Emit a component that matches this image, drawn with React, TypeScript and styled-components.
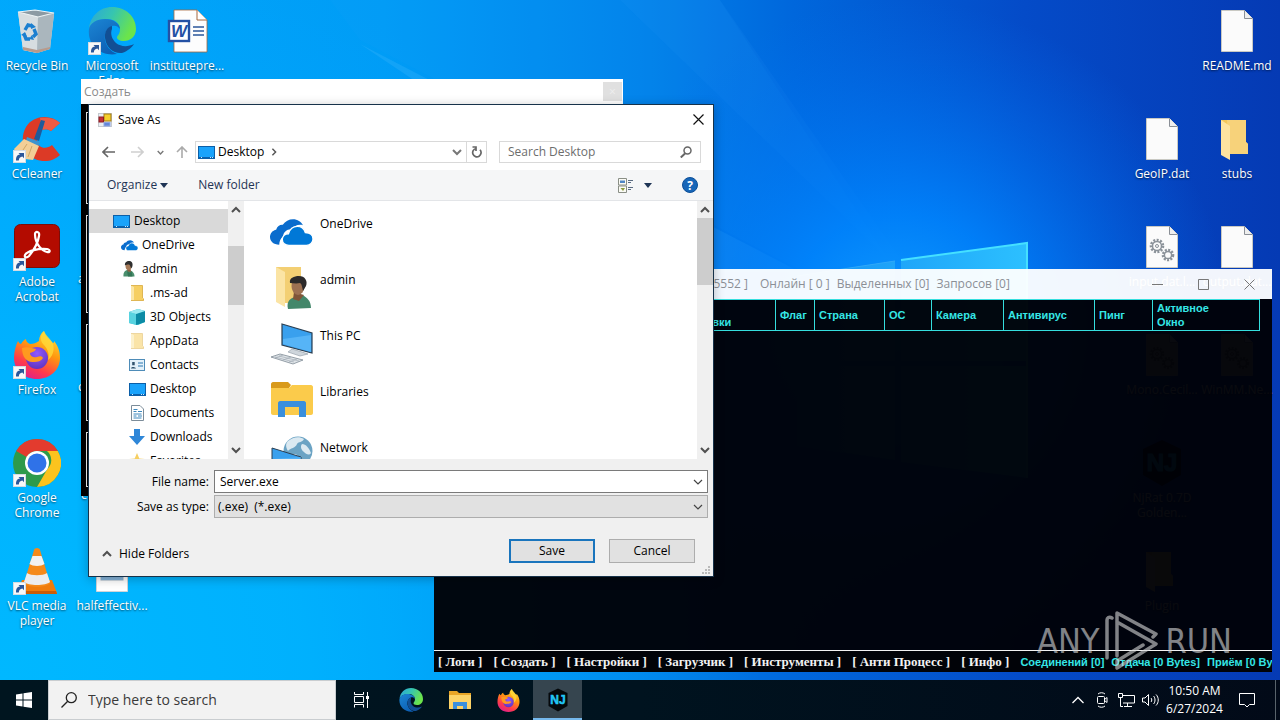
import React from "react";
import styled, { createGlobalStyle, css } from "styled-components";

const UI = `"Open Sans", "Noto Sans", sans-serif`;

const GlobalStyle = createGlobalStyle`
  * { box-sizing: border-box; }
  body { margin: 0; font-family: ${UI}; font-size: 12px; line-height: 16px; color: #000; }
  button, input, select { font: inherit; color: inherit; border-radius: 0; margin: 0; }
  button { background: none; border: 0; padding: 0; cursor: default; }
  svg { display: block; flex: none; }
`;

/* ---------- shell ---------- */

const Screen = styled.div`
  display: flex;
  flex-direction: column;
  height: 100vh;
  min-height: 700px;
  overflow: hidden;
`;

const Desktop = styled.main`
  position: relative;
  flex: 1;
  overflow: hidden;
  display: flex;
  justify-content: space-between;
  background: #0a6fe0;
`;

const Wallpaper = styled.svg`
  position: absolute;
  inset: 0;
  width: 100%;
  height: 100%;
`;

const IconGrid = styled.div<{ $cols: number }>`
  position: relative;
  display: grid;
  grid-template-columns: repeat(${(p) => p.$cols}, 75px);
  grid-auto-rows: 108px;
  margin-right: ${(p) => (p.$cols === 2 ? "5px" : "0")};
`;

const IconCell = styled.div<{ $col: number; $row: number }>`
  grid-column: ${(p) => p.$col};
  grid-row: ${(p) => p.$row};
  display: flex;
  flex-direction: column;
  align-items: center;
  gap: 3px;
  padding: 7px 1px 0 0;
  color: #fff;
  text-align: center;
`;

const IconLabel = styled.span`
  font-size: 12px;
  line-height: 15px;
  text-shadow: 0 1px 2px rgba(0, 0, 0, 0.6);
  white-space: pre;
`;

const EdgeLabel = styled(IconLabel)`
  align-self: flex-start;
  padding-left: 3px;
  margin-top: 48px;
`;

/* ---------- small glyphs ---------- */

const Chevron = ({ dir = "down", size = 10, color = "#444", w = 1.5 }: { dir?: "down" | "up" | "right"; size?: number; color?: string; w?: number }) => {
  const d = { down: "M1 3l4 4 4-4", up: "M1 7l4-4 4 4", right: "M3 1l4 4-4 4" }[dir];
  return (
    <svg width={size} height={size} viewBox="0 0 10 10" fill="none" stroke={color} strokeWidth={w}>
      <path d={d} />
    </svg>
  );
};

const ShortcutArrow = () => (
  <g>
    <rect x="0.5" y="35.5" width="12" height="12" fill="#f8f8f8" stroke="#d4dbe2" />
    <path d="M3 45.500c0-4 1-5.500 4-6l-1.500-1.600H11v5.300l-1.600-1.600C7 42 6 43 5.800 45.500z" fill="#2b579a" />
  </g>
);

const MonitorIcon = () => (
  <svg width="17" height="13" viewBox="0 0 17 13">
    <rect x="0.5" y="0.500" width="16" height="12" fill="#1aa3fb" stroke="#0b5fa8" />
    <path d="M1 11.500h15" stroke="#0b62ad" />
    <path d="M3 11.500h1M12 11.500h1M14 11.500h1" stroke="#cfeaff" />
  </svg>
);

const CloudIcon = ({ w, h }: { w: number; h: number }) => (
  <svg width={w} height={h} viewBox="0 0 42 26">
    <path d="M9 25C3.500 25 0 21.800 0 17.500c0-3.700 2.600-6.600 6-7.200C7 6.500 10 5.200 12.500 5.500 14.800 1.800 18.500 0 22.500 0c4.300 0 7.900 2.300 9.700 5.800-4.500-1.300-8.600.6-10.400 4-5-.7-9 2.700-9 7.200-2.600 1.700-3.600 5-3.800 8z" fill="#0a6ccd" />
    <path d="M18.500 25.500c-3.700 0-6.500-2.300-6.500-5.700 0-3.200 2.600-5.600 6-5.600 1.400-4.600 4.400-7.200 8.600-7.200 4 0 6.800 2.300 7.900 6 4.500.2 7.500 2.700 7.500 6.300 0 3.700-2.800 6.200-6.400 6.200z" fill="#0078d7" stroke="#fff" strokeWidth="1.300" />
  </svg>
);

const UserBust = () => (
  <svg width="12" height="16" viewBox="0 0 24 32">
    <path d="M1 31c-1-8 3-13 9-13 7 0 13 5 13 13z" fill="#4a8f6d" />
    <path d="M8 14l1 7 7 1-1-8z" fill="#8d6043" />
    <ellipse cx="11" cy="10" rx="6" ry="8" fill="#a67a58" />
    <path d="M4 9C3 3 7 0 12 0s8 4 7 9c0 3-2 5-3 6-1-4-2-7-4-8-3 0-6 0-8 2z" fill="#2f2f2f" />
    <path d="M8 20c2 3 6 4 9 1l2 10h-9z" fill="#347556" />
  </svg>
);

const SmallFolder = ({ pale }: { pale?: boolean }) => (
  <svg width="16" height="16" viewBox="0 0 16 16" opacity={pale ? 0.55 : 1}>
    <path d="M2 .5h11.500V13l1.500 1v1.500H2z" fill="#f6cf62" />
    <path d="M2 .5l3 1.500v13.800L2 15z" fill="#fbe6a6" />
    <path d="M2 .5h11.500V13M2 15.500h12.500v-2" fill="none" stroke="#d8a93c" strokeWidth=".8" />
  </svg>
);

/* ---------- desktop icons ---------- */

const Art = ({ children, shortcut }: { children: React.ReactNode; shortcut?: boolean }) => (
  <svg width="48" height="48" viewBox="0 0 48 48">
    {children}
    {shortcut && <ShortcutArrow />}
  </svg>
);

const Recycle = () => (
  <Art>
    <path d="M5 5l36 2-4 35-13 4-14-3z" fill="#cfd6da" />
    <path d="M5 5l20 4-1 37-14-3z" fill="#d7dde0" />
    <path d="M25 9l16-3-4 36-13 4z" fill="#aab6bd" />
    <path d="M5 5l17-2 19 3-16 4z" fill="#8c9aa3" stroke="#eef3f5" strokeWidth="1.200" />
    <path d="M10 40l14 3 13-3v2l-13 4-14-3z" fill="#b79a8c" />
    <g fill="none" stroke="#1c7fd0" strokeWidth="3.400">
      <path d="M12 23l3-5 4 1" />
      <path d="M21 22l2 5-3 3" />
      <path d="M17 32h-4l-2-5" />
    </g>
    <path d="M18 16l5 4-5 2zM21 33l-5-1 3-4zM8 28l4-3 2 5z" fill="#1c7fd0" />
  </Art>
);

const EdgeShapes = () => (
  <>
    <defs>
      <linearGradient id="edgeTop" x1="0" y1="0" x2="1" y2=".4">
        <stop offset="0" stopColor="#2aa5dc" />
        <stop offset=".5" stopColor="#36c5b0" />
        <stop offset="1" stopColor="#6be44b" />
      </linearGradient>
      <linearGradient id="edgeMid" x1="0" y1="0" x2=".6" y2="1">
        <stop offset="0" stopColor="#1c86d4" />
        <stop offset="1" stopColor="#0c5fb4" />
      </linearGradient>
    </defs>
    <path d="M1 22C2 9 12 0 24 0c14 0 24 10 24 22 0 8-6 12-12 12-5 0-7-2-7-3.500 0-2 3-3 3-8C32 16 26 12 19 12 9 12 2 17 1 22z" fill="url(#edgeTop)" />
    <path d="M1 22c1-6 8-10 16-10 9 0 15 5 15 10-2-3-5-4-8-3-5 2-8 7-7 14 1 6 5 11 12 14C13 50-1 38 1 22z" fill="url(#edgeMid)" />
    <path d="M24 19c-5 1-7.500 6-7 12 1 10 9 16 17 15 6-2 10-6 12-9-6 3-13 3-18-1-4-4-6-9-4-14 0-1 0-2 0-3z" fill="#124f94" />
  </>
);

const WordDoc = () => (
  <Art>
    <path d="M11 3h23l10 10v32H11z" fill="#fdfdfd" stroke="#a4673e" strokeWidth=".8" />
    <path d="M34 3v10h10" fill="#fff" stroke="#a4673e" />
    <path d="M30 20h11M30 24h11M30 28h11" stroke="#2b579a" strokeWidth="1.400" />
    <rect x="6" y="14" width="20" height="20" fill="#fff" stroke="#2451a4" strokeWidth="2.400" />
    <text x="16" y="30" textAnchor="middle" fontFamily="Liberation Sans, sans-serif" fontWeight="700" fontStyle="italic" fontSize="17" fill="#2451a4">W</text>
  </Art>
);

const CCleaner = () => (
  <Art shortcut>
    <path d="M47 8C38-1 20 0 13 12c-7 12-2 28 9 32 9 4 19 2 25-4l-8-10c-6 5-14 3-15-4-2-9 6-15 14-10z" fill="#dc3a26" />
    <path d="M47 8l-9 8c-3-2-6-2-9-1L27 3c8-1 15 0 20 5z" fill="#ee5b43" />
    <path d="M28 5l4 1-6 20-5-2z" fill="#1e5b9b" />
    <path d="M14 22l13 5-3 7-12-5z" fill="#3d93cf" />
    <path d="M11 24l15 7-6 14-8-1-8-4-3-6z" fill="#f2cf97" />
    <path d="M14 29l-6 9M19 31l-4 11" stroke="#d2a765" fill="none" />
  </Art>
);

const Acrobat = () => (
  <Art shortcut>
    <rect x="1.500" y="1.500" width="45" height="43" rx="6" fill="#b30b00" stroke="#7b0d08" />
    <path d="M22 11c0-3 5-3 4 2-1 7-5 14-10 20-2 2-5 2-4-1 2-4 14-7 22-6 4 1 3 4 0 3-5-1-12-8-12-18z" fill="none" stroke="#fff" strokeWidth="2.200" strokeLinejoin="round" />
  </Art>
);

const FirefoxShapes = () => (
  <>
    <defs>
      <linearGradient id="ffBody" x1=".8" y1="0" x2=".3" y2="1">
        <stop offset="0" stopColor="#ffe13d" />
        <stop offset=".4" stopColor="#ff980e" />
        <stop offset=".75" stopColor="#ff3b4b" />
        <stop offset="1" stopColor="#e01f8a" />
      </linearGradient>
      <radialGradient id="ffGlobe" cx=".5" cy=".3" r=".8">
        <stop offset="0" stopColor="#9059ff" />
        <stop offset="1" stopColor="#5b2fb8" />
      </radialGradient>
    </defs>
    <path d="M5 10c1 2 2 3 3 3 2-3 3-4 5-5 0 3 2 4 4 5 4 0 6-1 9-3 0-4 2-8 5-10 1 5 5 8 9 12 1 0 1-1 1-2 5 6 6 12 6 17 0 12-10 21-23 21C11 48 1 39 1 27c0-7 2-13 4-17z" fill="url(#ffBody)" />
    <circle cx="24" cy="27" r="11" fill="url(#ffGlobe)" />
    <path d="M9 17c5-2 10 0 14 1-1 3-4 3-6 4 0 3 3 5 7 4 3-1 5-1 6 1-2 3-5 4-9 4C14 32 9 26 9 17z" fill="#ff9a1f" />
    <path d="M31 0c-4 5-4 9-1 13 4 4 7 9 5 16 4-3 7-9 5-16-2-5-7-8-9-13z" fill="#ffd93a" opacity=".8" />
  </>
);

const ChromeArt = () => (
  <Art shortcut>
    <circle cx="24" cy="24" r="24" fill="#2d9a4b" />
    <path d="M24 0a24 24 0 0 1 20.800 12H24a12 12 0 0 0-10.400 6L3.200 12A24 24 0 0 1 24 0z" fill="#e33b2e" />
    <path d="M44.800 12A24 24 0 0 1 24 48l10.400-18A12 12 0 0 0 34 12z" fill="#fcc31e" />
    <circle cx="24" cy="24" r="12" fill="#fff" />
    <circle cx="24" cy="24" r="9.500" fill="#2f72e8" />
  </Art>
);

const VlcArt = () => (
  <Art shortcut>
    <path d="M9 33h30l5 13c0 1-1 1-2 1H6c-1 0-2 0-2-1z" fill="#f07c0c" />
    <path d="M5 44h38l1 3H4z" fill="#c95c06" />
    <path d="M24 1c2 0 3 1 3 2l10 33c-3 5-23 5-26 0L21 3c0-1 1-2 3-2z" fill="#f58a1a" />
    <path d="M19.500 9h9l3 8c-3 2.500-12 2.500-15 0z" fill="#f2f2f2" />
    <path d="M14 26c4 3 16 3 20 0l3 9c-4 4-22 4-26 0z" fill="#ededed" />
  </Art>
);

const PageArt = ({ gears, dim }: { gears?: boolean; dim?: boolean }) => (
  <Art>
    <path d="M8.500 3.500h23l8 8v33h-31z" fill={dim ? "#c9c6a8" : "#fbfbfb"} stroke="#c9c9c3" />
    <path d="M31.500 3.500v8h8" fill="#eee" stroke="#8a8f96" />
    {gears && (
      <g fill="none" stroke={dim ? "#777258" : "#8b9299"}>
        <circle cx="19" cy="23" r="6" strokeWidth="2.600" strokeDasharray="2 1.400" />
        <circle cx="19" cy="23" r="4.500" strokeWidth="1.500" />
        <circle cx="30" cy="32" r="5" strokeWidth="2.600" strokeDasharray="2 1.300" />
        <circle cx="30" cy="32" r="3.600" strokeWidth="1.500" />
        <circle cx="19" cy="23" r="1.500" />
      </g>
    )}
  </Art>
);

const FolderArt = () => (
  <Art>
    <path d="M8 5h25v22l2 2v10H8z" fill="#f3c65a" />
    <path d="M14 5h19v22l2 2v10H16z" fill="#f7d27a" />
    <path d="M8 5l9 6v34l-9-5z" fill="#fde3a0" />
  </Art>
);

const NjShapes = () => (
  <>
    <path d="M24 1l19 9v26L24 47 5 36V10z" fill="#05080b" />
    <text x="24" y="32" textAnchor="middle" fontFamily="Liberation Sans, sans-serif" fontWeight="700" fontSize="24" fill="#22c7f5" stroke="#22c7f5">NJ</text>
  </>
);

const PhotoArt = () => (
  <Art>
    <path d="M8.500 2.500h31v42h-31z" fill="#fff" stroke="#d0d4d8" />
    <rect x="13" y="10" width="22" height="23" fill="#2b5279" stroke="#9fb4c6" />
    <path d="M13 27c6-3 14-4 22-1v7H13z" fill="#86b4da" />
  </Art>
);

type Item = { col: number; row: number; label?: string; edge?: string; art?: React.ReactNode };

const leftItems: Item[] = [
  { col: 1, row: 1, label: "Recycle Bin", art: <Recycle /> },
  { col: 2, row: 1, label: "Microsoft\nEdge", art: <Art shortcut><EdgeShapes /></Art> },
  { col: 3, row: 1, label: "institutepre...", art: <WordDoc /> },
  { col: 1, row: 2, label: "CCleaner", art: <CCleaner /> },
  { col: 1, row: 3, label: "Adobe\nAcrobat", art: <Acrobat /> },
  { col: 2, row: 3, edge: "a" },
  { col: 1, row: 4, label: "Firefox", art: <Art shortcut><FirefoxShapes /></Art> },
  { col: 2, row: 4, edge: "c" },
  { col: 1, row: 5, label: "Google\nChrome", art: <ChromeArt /> },
  { col: 2, row: 5, edge: " c" },
  { col: 1, row: 6, label: "VLC media\nplayer", art: <VlcArt /> },
  { col: 2, row: 6, label: "halfeffectiv...", art: <PhotoArt /> },
];

const rightItems: Item[] = [
  { col: 2, row: 1, label: "README.md", art: <PageArt /> },
  { col: 1, row: 2, label: "GeoIP.dat", art: <PageArt /> },
  { col: 2, row: 2, label: "stubs", art: <FolderArt /> },
  { col: 1, row: 3, label: "input.dat.l...", art: <PageArt gears /> },
  { col: 2, row: 3, label: "output.dat...", art: <PageArt /> },
  { col: 1, row: 4, label: "Mono.Cecil...", art: <PageArt gears dim /> },
  { col: 2, row: 4, label: "WinMM.Ne...", art: <PageArt gears dim /> },
  { col: 1, row: 5, label: "NjRat 0.7D\nGolden...", art: <Art><NjShapes /></Art> },
  { col: 1, row: 6, label: "Plugin", art: <FolderArt /> },
];

const Icons = ({ items, cols }: { items: Item[]; cols: number }) => (
  <IconGrid $cols={cols}>
    {items.map((it) => (
      <IconCell key={`${it.col}-${it.row}`} $col={it.col} $row={it.row}>
        {it.art}
        {it.label ? <IconLabel>{it.label}</IconLabel> : <EdgeLabel>{it.edge}</EdgeLabel>}
      </IconCell>
    ))}
  </IconGrid>
);

const Background = () => (
  <Wallpaper viewBox="0 0 1280 680" preserveAspectRatio="none" aria-hidden="true">
    <defs>
      <linearGradient id="sky" x1="0" y1="0" x2="1" y2="0">
        <stop offset="0" stopColor="#00a8fb" />
        <stop offset=".3" stopColor="#009cf6" />
        <stop offset=".5" stopColor="#0082ea" />
        <stop offset=".62" stopColor="#0067dc" />
        <stop offset=".8" stopColor="#044bc8" />
        <stop offset="1" stopColor="#053ab4" />
      </linearGradient>
      <radialGradient id="low" cx="0" cy="680" r="760" gradientUnits="userSpaceOnUse">
        <stop offset="0" stopColor="#00b8ff" />
        <stop offset=".4" stopColor="#00b5ff" stopOpacity=".8" />
        <stop offset="1" stopColor="#00a8ff" stopOpacity="0" />
      </radialGradient>
      <radialGradient id="glow" cx="900" cy="330" r="330" gradientUnits="userSpaceOnUse">
        <stop offset="0" stopColor="#12a0ff" />
        <stop offset=".35" stopColor="#0086ff" stopOpacity=".85" />
        <stop offset="1" stopColor="#0070f0" stopOpacity="0" />
      </radialGradient>
      <linearGradient id="pane" x1="0" y1="0" x2="1" y2="0">
        <stop offset="0" stopColor="#1590f4" />
        <stop offset="1" stopColor="#2cc0ff" />
      </linearGradient>
    </defs>
    <rect width="1280" height="680" fill="url(#sky)" />
    <rect width="1280" height="680" fill="url(#low)" />
    <path d="M330 0h390l170 262-90 8L360 40z" fill="#27a5ff" opacity=".08" />
    <path d="M360 44l440 228-100 0z" fill="#5cc4ff" opacity=".2" />
    <path d="M620 0h100l180 258-10 3z" fill="#3aa8ff" opacity=".08" />
    <rect x="500" width="780" height="680" fill="url(#glow)" />
    <path d="M797 276l98-15v100h-98zM901 260l126-17v118H901zM797 366h98v94l-98-14zM901 366h126v112l-126-16z" fill="url(#pane)" />
    <path d="M901 260l126-17v235" fill="none" stroke="#45e0ff" strokeWidth="2" />
    <path d="M797 276l98-15" stroke="#2fa8f8" />
  </Wallpaper>
);

/* ---------- background "create" window ---------- */

const CreateWindow = styled.section`
  position: absolute;
  left: 81px;
  top: 79px;
  width: 542px;
  height: 417px;
  background: #000;
  display: flex;
  flex-direction: column;
`;

const CreateTitle = styled.header`
  display: flex;
  align-items: center;
  justify-content: space-between;
  height: 25px;
  padding: 0 1px 0 3px;
  background: #fff;
  color: #8a8a8a;
`;

const CreateClose = styled.button`
  width: 19px;
  height: 19px;
  background: #e0e0e0;
  color: #eee;
  line-height: 16px;
`;

const Groups = styled.div`
  flex: 1;
  display: grid;
  grid-template-rows: 92px 98px 97px 55px;
  gap: 11px;
  padding: 8px 5px;
`;

const Group = styled.div`
  border: 1px solid #f4f4f4;
`;

/* ---------- client window ---------- */

const Client = styled.section`
  position: absolute;
  left: 434px;
  right: 8px;
  top: 269px;
  bottom: 8px;
  display: flex;
  flex-direction: column;
  overflow: hidden;
`;

const ClientTitle = styled.header`
  display: flex;
  align-items: center;
  gap: 7px;
  height: 30px;
  background: rgba(255, 255, 255, 0.95);
  color: #8b8f96;
  white-space: pre;
`;

const PortText = styled.span`
  width: 314px;
  margin-right: 5px;
  text-align: right;
`;

const Caption = styled.div`
  display: flex;
  margin-left: auto;
`;

const CaptionButton = styled.button`
  display: grid;
  place-items: center;
  width: 46px;
  height: 29px;
`;

const ClientBody = styled.div`
  flex: 1;
  background: rgba(0, 1, 6, 0.965);
`;

const HeadTable = styled.table`
  border-collapse: collapse;
  table-layout: fixed;
  width: 825px;
  height: 31px;
  font: bold 11px/14px "Liberation Sans", sans-serif;
  color: #35e6e6;
`;

const HeadCell = styled.th<{ $w: number }>`
  width: ${(p) => p.$w}px;
  height: 31px;
  padding: 0 4px;
  border: 1px solid #35dede;
  text-align: left;
  vertical-align: middle;
  white-space: pre;
`;

const ClientFooter = styled.footer`
  display: flex;
  align-items: center;
  height: 22px;
  padding-left: 4px;
  border-top: 1px solid #f2f2f2;
  background: #010308;
  white-space: nowrap;
`;

const MenuButton = styled.button`
  margin-right: 11px;
  font: bold 13px/16px "Liberation Serif", serif;
  color: #f2f2f2;
  white-space: pre;
`;

const Status = styled.span`
  margin-right: 7px;
  font: bold 11px/14px "Liberation Sans", sans-serif;
  color: #35e6e6;
`;

const columns: [string, number][] = [
  ["", 236],
  ["Дата\nУстановки", 105],
  ["Флаг", 39],
  ["Страна", 70],
  ["ОС", 47],
  ["Камера", 72],
  ["Антивирус", 91],
  ["Пинг", 58],
  ["Активное\nОкно", 107],
];

const menu = ["Логи", "Создать", "Настройки", "Загрузчик", "Инструменты", "Анти Процесс", "Инфо"];

const ClientWindow = () => (
  <Client>
    <ClientTitle>
      <PortText>[ Порт: 5552 ]</PortText>
      <span>Онлайн [ 0 ]</span>
      <span>Выделенных [0]</span>
      <span>Запросов [0]</span>
      <Caption>
        <CaptionButton aria-label="Minimize">
          <svg width="11" height="11" stroke="#777"><path d="M0 5.500h11" /></svg>
        </CaptionButton>
        <CaptionButton aria-label="Maximize">
          <svg width="11" height="11" stroke="#777" fill="none"><path d="M.5.5h10v10H.5z" /></svg>
        </CaptionButton>
        <CaptionButton aria-label="Close">
          <svg width="11" height="11" stroke="#777"><path d="M.5.5l10 10M10.500.5l-10 10" /></svg>
        </CaptionButton>
      </Caption>
    </ClientTitle>
    <ClientBody>
      <HeadTable>
        <thead>
          <tr>
            {columns.map(([name, w]) => (
              <HeadCell key={name} $w={w}>{name}</HeadCell>
            ))}
          </tr>
        </thead>
      </HeadTable>
    </ClientBody>
    <ClientFooter>
      {menu.map((m) => (
        <MenuButton key={m}>{`[ ${m} ]`}</MenuButton>
      ))}
      <Status>Соединений [0]</Status>
      <Status>Отдача [0 Bytes]</Status>
      <Status>Приём [0 Bytes]</Status>
    </ClientFooter>
  </Client>
);

/* ---------- save dialog ---------- */

const Dialog = styled.section`
  position: absolute;
  left: 88px;
  top: 104px;
  width: 626px;
  height: 473px;
  display: flex;
  flex-direction: column;
  border: 1px solid #17324a;
  background: #fff;
  box-shadow: 0 2px 10px rgba(0, 0, 0, 0.25);
`;

const DialogTitle = styled.header`
  display: flex;
  align-items: center;
  gap: 6px;
  height: 29px;
  padding: 0 9px;
`;

const CloseButton = styled.button`
  margin-left: auto;
`;

const NavRow = styled.div`
  display: flex;
  align-items: center;
  height: 36px;
  padding: 0 12px 0 13px;
`;

const NavButtons = styled.div`
  display: grid;
  grid-template-columns: 29px 26px 19px 19px;
  align-items: center;
  button { display: flex; }
`;

const field = css`
  display: flex;
  align-items: center;
  height: 22px;
  border: 1px solid #d9d9d9;
  background: #fff;
`;

const Address = styled.div`
  ${field}
  flex: 1;
  padding-left: 2px;
`;

const Crumb = styled.button`
  display: flex;
  align-items: center;
  gap: 3px;
  margin-right: 6px;
`;

const AddressTools = styled.div`
  display: flex;
  align-self: stretch;
  align-items: center;
  margin-left: auto;
`;

const Refresh = styled.button`
  display: grid;
  place-items: center;
  align-self: stretch;
  width: 20px;
  margin-left: 4px;
  border-left: 1px solid #d9d9d9;
`;

const SearchField = styled.label`
  ${field}
  width: 202px;
  margin-left: 12px;
  padding: 0 8px;
  input {
    flex: 1;
    min-width: 0;
    border: 0;
    padding: 0;
    outline: 0;
    background: none;
  }
  input::placeholder { color: #6d6d6d; opacity: 1; }
`;

const Toolbar = styled.div`
  display: flex;
  align-items: center;
  height: 31px;
  padding: 0 15px 0 18px;
  background: #f5f6f7;
  border-bottom: 1px solid #e3e5e8;
  color: #1e3455;
`;

const ToolButton = styled.button<{ $gap?: number }>`
  display: flex;
  align-items: center;
  gap: 3px;
  margin-right: ${(p) => p.$gap ?? 0}px;
`;

const ToolRight = styled.div`
  display: flex;
  align-items: center;
  margin-left: auto;
`;

const Panes = styled.div`
  display: flex;
  height: 258px;
  overflow: hidden;
`;

const Tree = styled.ul`
  width: 139px;
  margin: 0;
  padding: 8px 0 0;
  list-style: none;
  overflow: hidden;
`;

const TreeItem = styled.li<{ $level: number; $active?: boolean }>`
  display: flex;
  align-items: center;
  gap: 4px;
  height: 24px;
  padding-left: ${(p) => 23 + p.$level * 8}px;
  background: ${(p) => (p.$active ? "#d9d9d9" : "transparent")};
`;

const TreeIcon = styled.span`
  display: grid;
  place-items: center;
  width: 18px;
  height: 16px;
`;

const ScrollTrack = styled.div`
  display: flex;
  flex-direction: column;
  align-items: center;
  justify-content: space-between;
  width: 16px;
  padding: 4px 0;
  background: #f0f0f0;
`;

const Thumb = styled.div<{ $before: number; $size: number }>`
  width: 16px;
  height: ${(p) => p.$size}px;
  margin: ${(p) => p.$before}px 0 auto;
  background: #cdcdcd;
`;

const Files = styled.ul`
  flex: 1;
  margin: 0;
  padding: 4px 0 0 24px;
  list-style: none;
  overflow: hidden;
`;

const FileItem = styled.li`
  display: flex;
  gap: 5px;
  height: 56px;
  span { padding-top: 11px; }
`;

const FileIcon = styled.div`
  display: grid;
  place-items: center;
  width: 47px;
  height: 54px;
`;

const Bottom = styled.form`
  flex: 1;
  display: flex;
  flex-direction: column;
  padding: 11px 5px 0 12px;
  background: #f0f0f0;
`;

const Fields = styled.div`
  display: grid;
  grid-template-columns: 108px 1fr;
  gap: 2px 5px;
  align-items: center;
  label { text-align: right; }
`;

const Combo = styled.div<{ $grey?: boolean }>`
  display: grid;
  grid-template-columns: 1fr 18px;
  align-items: center;
  height: 23px;
  border: 1px solid ${(p) => (p.$grey ? "#adadad" : "#7a7a7a")};
  background: ${(p) => (p.$grey ? "#e1e1e1" : "#fff")};
  input, select {
    grid-area: 1 / 1 / 2 / 3;
    width: 100%;
    height: 21px;
    padding: 0 5px;
    border: 0;
    outline: 0;
    background: none;
    appearance: none;
  }
  select { padding: 0 3px; }
  svg { grid-area: 1 / 2; justify-self: center; pointer-events: none; }
`;

const Actions = styled.div`
  display: flex;
  align-items: center;
  gap: 14px;
  height: 24px;
  margin-top: 21px;
  padding-right: 13px;
`;

const HideFolders = styled.button`
  display: flex;
  align-items: center;
  gap: 7px;
  margin-right: auto;
  padding: 5px 0 0 1px;
`;

const PushButton = styled.button<{ $primary?: boolean }>`
  width: 86px;
  height: 24px;
  background: #e1e1e1;
  border: ${(p) => (p.$primary ? "2px solid #1a75bd" : "1px solid #adadad")};
`;

const Grip = styled.svg`
  align-self: flex-end;
  margin: 3px -3px 0 0;
`;

const treeRows: [string, number, React.ReactNode][] = [
  ["Desktop", 0, <MonitorIcon />],
  ["OneDrive", 1, <CloudIcon w={17} h={11} />],
  ["admin", 1, <UserBust />],
  [".ms-ad", 2, <SmallFolder />],
  ["3D Objects", 2,
    <svg width="16" height="16" viewBox="0 0 16 16">
      <path d="M0 3l9-3 7 2v11l-7 3-9-2z" fill="#1fb5c9" />
      <path d="M0 3l7 2v11l-7-2z" fill="#57d3e0" />
      <path d="M7 5l9-3v11l-9 3z" fill="#0c8ba5" />
      <path d="M0 3l9-3 7 2-9 3z" fill="#9aeaf1" />
    </svg>],
  ["AppData", 2, <SmallFolder pale />],
  ["Contacts", 2,
    <svg width="16" height="12" viewBox="0 0 16 12">
      <rect x=".5" y=".5" width="15" height="11" fill="#e3f1fa" stroke="#4e8cb8" />
      <path d="M2 9.500c0-2 4-2 5 0zM3.200 3h2.500v3.200H3.200z" fill="#31536e" />
      <path d="M9 4h5M9 7h5" stroke="#2b77b0" />
    </svg>],
  ["Desktop", 2, <MonitorIcon />],
  ["Documents", 2,
    <svg width="13" height="16" viewBox="0 0 13 16">
      <path d="M.5.5H9l3.500 3.500v11.500H.5z" fill="#fff" stroke="#7c8c99" />
      <path d="M2.500 4.500h4M2.500 6.500h3M7 6.500h4M2.500 9h8M2.500 11h3M7 11h4M2.500 13h8" stroke="#3e88bd" />
    </svg>],
  ["Downloads", 2,
    <svg width="16" height="16" viewBox="0 0 16 16"><path d="M5 0h6v7h5l-8 9-8-9h5z" fill="#2f87d8" /></svg>],
  ["Favorites", 2,
    <svg width="16" height="16" viewBox="0 0 16 16"><path d="M8 0l2.300 5.500 5.700.5-4.300 4 1.300 6L8 12.800 3 16l1.300-6L0 6l5.700-.5z" fill="#f6cf62" /></svg>],
];

const files: [string, React.ReactNode][] = [
  ["OneDrive", <CloudIcon w={43} h={27} />],
  ["admin",
    <svg width="40" height="42" viewBox="0 0 40 42">
      <path d="M4 0h25v36H12L4 32z" fill="#f3cf73" />
      <path d="M4 0l9 5v35l-9-5z" fill="#fbe4a4" />
      <path d="M16 42c-2-8 3-12 9-12l5-2c5 2 9 6 9 13z" fill="#43876a" />
      <path d="M22 25l-1 7 6 2 5-6z" fill="#805538" />
      <ellipse cx="26" cy="19" rx="6.500" ry="9" fill="#9d7152" />
      <path d="M18 16c-1-5 4-7 9-7 6 0 9 5 7 10l-3 5c-1-4-1-7-3-8-4 1-7 0-10 0z" fill="#2c2a2a" />
    </svg>],
  ["This PC",
    <svg width="42" height="42" viewBox="0 0 42 42">
      <path d="M11 1l30 9v20L11 22z" fill="#39a0ee" stroke="#2b3f52" strokeWidth="1.200" />
      <path d="M12 16l28-4v17L12 21z" fill="#63bcfb" opacity=".7" />
      <path d="M21 26l10 3 6 2-8 2-12-4z" fill="#cfd6dc" stroke="#8d99a3" strokeWidth=".6" />
      <path d="M0 34l9-3 23 6-10 4z" fill="#dfe4e8" stroke="#7e8a94" strokeWidth=".8" />
      <path d="M4 34l19 5M8 33l20 5M12 32l-8 3M20 34l-8 3M26 36l-8 3" stroke="#9aa5ae" strokeWidth=".6" />
    </svg>],
  ["Libraries",
    <svg width="42" height="36" viewBox="0 0 42 36">
      <path d="M0 2c0-1 1-2 2-2h15l3 3-2 3H0z" fill="#d99a1b" />
      <path d="M0 6h18l3-3h19c1 0 2 1 2 2v26c0 1-1 2-2 2H2c-1 0-2-1-2-2z" fill="#fbcb4b" />
      <path d="M7 35V21c0-1 1-2 2-2h24c1 0 2 1 2 2v14h-7V25H14v10z" fill="#3a8fdc" />
    </svg>],
  ["Network",
    <svg width="42" height="42" viewBox="0 0 42 42">
      <circle cx="27" cy="16" r="14.500" fill="#6ba3c4" />
      <path d="M17 6c5-4 11-5 16-2-2 4-5 2-7 5-1 4-7 4-9 7-2-3-3-7 0-10zM31 9c4 0 7 4 9 9-2 3-5 1-7-1-3-2-4-6-2-8zM22 19c4 0 6 2 7 5l-5 5-6-4z" fill="#dbe9f1" />
      <path d="M1 13l29 9v20L1 34z" fill="#39a0ee" stroke="#2b3f52" />
      <path d="M2 24l28-2v19L2 33z" fill="#63bcfb" opacity=".6" />
    </svg>],
];

const SaveDialog = () => (
  <Dialog role="dialog" aria-label="Save As">
    <DialogTitle>
      <svg width="14" height="14" viewBox="0 0 14 14">
        <rect x=".5" y=".5" width="13" height="13" fill="#e9edf2" stroke="#c5c9cf" />
        <rect x="6" y="1" width="7" height="7" fill="#f5cf2c" stroke="#a57c13" />
        <rect x="1" y="4" width="4.500" height="5" fill="#c62f35" stroke="#8e1e24" />
        <rect x="6" y="9.500" width="6" height="3.500" fill="#6486d8" stroke="#8ea6e2" />
      </svg>
      <span>Save As</span>
      <CloseButton aria-label="Close">
        <svg width="11" height="11" stroke="#111"><path d="M.5.5l10 10M10.500.5l-10 10" strokeWidth="1.200" /></svg>
      </CloseButton>
    </DialogTitle>
    <NavRow>
      <NavButtons>
        <button aria-label="Back">
          <svg width="13" height="12" viewBox="0 0 13 12" fill="none" stroke="#666" strokeWidth="1.600"><path d="M13 6H1M6 1L1 6l5 5" /></svg>
        </button>
        <button aria-label="Forward">
          <svg width="13" height="12" viewBox="0 0 13 12" fill="none" stroke="#cfcfcf" strokeWidth="1.600"><path d="M0 6h12M7 1l5 5-5 5" /></svg>
        </button>
        <button aria-label="Recent locations"><Chevron size={7} w={2} color="#777" /></button>
        <button aria-label="Up">
          <svg width="12" height="12" viewBox="0 0 12 12" fill="none" stroke="#aaa" strokeWidth="1.600"><path d="M6 12V1M1 6l5-5 5 5" /></svg>
        </button>
      </NavButtons>
      <Address>
        <Crumb><MonitorIcon />Desktop</Crumb>
        <Chevron dir="right" size={8} color="#555" w={1.8} />
        <AddressTools>
          <Chevron size={10} color="#777" w={2} />
          <Refresh aria-label="Refresh">
            <svg width="11" height="12" viewBox="0 0 11 12" fill="none" stroke="#666" strokeWidth="1.700">
              <path d="M9 3.800A4.200 4.200 0 1 1 5 2.500M1.500 1H5v4" />
            </svg>
          </Refresh>
        </AddressTools>
      </Address>
      <SearchField>
        <input type="text" placeholder="Search Desktop" aria-label="Search Desktop" />
        <svg width="12" height="12" viewBox="0 0 12 12" fill="none" stroke="#666" strokeWidth="1.500">
          <circle cx="7.500" cy="4.500" r="3.500" /><path d="M5 7.500L.8 11.500" strokeWidth="2" />
        </svg>
      </SearchField>
    </NavRow>
    <Toolbar>
      <ToolButton $gap={30}>
        Organize
        <svg width="8" height="5"><path d="M0 0h8L4 5z" fill="#1e3455" /></svg>
      </ToolButton>
      <ToolButton>New folder</ToolButton>
      <ToolRight>
        <ToolButton $gap={10} aria-label="Change view">
          <svg width="16" height="15" viewBox="0 0 16 15" fill="none">
            <path d="M.5.500h8v6.500h-8zM.5 8h8v6.500h-8z" stroke="#8a8f86" fill="#fbfbf5" />
            <path d="M2 5V2.500h5V5z" fill="#4f86c4" /><path d="M2.500 10H7l-2 3z" fill="#8a9a3c" />
            <path d="M10 2.500h5M10 4.500h3M10 9.500h5M10 11.500h3" stroke="#596a80" />
          </svg>
        </ToolButton>
        <ToolButton $gap={30} aria-label="More views">
          <svg width="8" height="5"><path d="M0 0h8L4 5z" fill="#1e3455" /></svg>
        </ToolButton>
        <ToolButton aria-label="Help">
          <svg width="16" height="16" viewBox="0 0 16 16">
            <circle cx="8" cy="8" r="7.500" fill="#1766b8" stroke="#0d4f98" />
            <text x="8" y="12.500" textAnchor="middle" fontFamily="Open Sans, sans-serif" fontWeight="700" fontSize="12" fill="#fff">?</text>
          </svg>
        </ToolButton>
      </ToolRight>
    </Toolbar>
    <Panes>
      <Tree>
        {treeRows.map(([name, level, icon], i) => (
          <TreeItem key={i} $level={level} $active={i === 0}>
            <TreeIcon>{icon}</TreeIcon>
            {name}
          </TreeItem>
        ))}
      </Tree>
      <ScrollTrack>
        <Chevron dir="up" color="#505050" w={2} />
        <Thumb $before={31} $size={59} />
        <Chevron color="#505050" w={2} />
      </ScrollTrack>
      <Files>
        {files.map(([name, icon]) => (
          <FileItem key={name}>
            <FileIcon>{icon}</FileIcon>
            <span>{name}</span>
          </FileItem>
        ))}
      </Files>
      <ScrollTrack>
        <Chevron dir="up" color="#505050" w={2} />
        <Thumb $before={3} $size={67} />
        <Chevron color="#505050" w={2} />
      </ScrollTrack>
    </Panes>
    <Bottom onSubmit={(e) => e.preventDefault()}>
      <Fields>
        <label htmlFor="file-name">File name:</label>
        <Combo>
          <input id="file-name" type="text" defaultValue="Server.exe" />
          <Chevron w={1.2} />
        </Combo>
        <label htmlFor="file-type">Save as type:</label>
        <Combo $grey>
          <select id="file-type"><option>(.exe)&nbsp; (*.exe)</option></select>
          <Chevron w={1.2} />
        </Combo>
      </Fields>
      <Actions>
        <HideFolders type="button"><Chevron dir="up" w={2} color="#505050" />Hide Folders</HideFolders>
        <PushButton type="submit" $primary>Save</PushButton>
        <PushButton type="button">Cancel</PushButton>
      </Actions>
      <Grip width="9" height="9" fill="#b9b9b9">
        <path d="M6 0h2v2H6zM3 3h2v2H3zM6 3h2v2H6zM0 6h2v2H0zM3 6h2v2H3zM6 6h2v2H6z" />
      </Grip>
    </Bottom>
  </Dialog>
);

/* ---------- watermark ---------- */

const Watermark = styled.div`
  position: absolute;
  right: 48px;
  bottom: 8px;
  display: flex;
  align-items: center;
  gap: 5px;
  opacity: 0.6;
  pointer-events: none;
  font: 34px/40px "DejaVu Sans Condensed", sans-serif;
  color: #d8d8d8;
`;

/* ---------- taskbar ---------- */

const Taskbar = styled.nav`
  display: flex;
  align-items: stretch;
  height: 40px;
  background: linear-gradient(90deg, #00151f, #00131f 50%, #020a18);
  color: #fff;
`;

const TaskButton = styled.button<{ $active?: boolean }>`
  display: grid;
  place-items: center;
  width: 49px;
  border-bottom: 2px solid ${(p) => (p.$active ? "#76b9ed" : "transparent")};
  background: ${(p) => (p.$active ? "#36454f" : "transparent")};
  padding-top: 2px;
`;

const StartButton = styled(TaskButton)`
  width: 48px;
`;

const TaskIcons = styled.div`
  display: flex;
  padding-left: 1px;
`;

const SearchBox = styled.label`
  display: flex;
  align-items: center;
  gap: 11px;
  width: 288px;
  padding: 0 12px;
  background: #f2f2f2;
  border: 1px solid #c9cdd0;
  input {
    flex: 1;
    min-width: 0;
    padding: 0;
    border: 0;
    outline: 0;
    background: none;
    font-size: 14px;
  }
  input::placeholder { color: #3a3a3a; opacity: 1; }
`;

const Tray = styled.div`
  display: flex;
  align-items: center;
  gap: 8px;
  margin-left: auto;
`;

const TrayButton = styled.button`
  display: grid;
  place-items: center;
  width: 16px;
  height: 40px;
`;

const Clock = styled.time`
  width: 57px;
  line-height: 18px;
  text-align: center;
  white-space: nowrap;
`;

const Notify = styled(TrayButton)`
  width: 32px;
  margin-right: 4px;
`;

const ShowDesktop = styled.button`
  width: 5px;
  height: 40px;
  border-left: 1px solid #59636b;
`;

const TaskbarView = () => (
  <Taskbar>
    <StartButton aria-label="Start">
      <svg width="16" height="16" fill="#fff"><path d="M0 2.500l6.500-1v6H0zM7.500 1.300L16 0v7.500H7.500zM0 8.500h6.500v6l-6.500-1zM7.500 8.500H16V16l-8.500-1.300z" /></svg>
    </StartButton>
    <SearchBox>
      <svg width="16" height="16" viewBox="0 0 16 16" fill="none" stroke="#222" strokeWidth="1.300">
        <circle cx="10.300" cy="5.700" r="5" /><path d="M6.700 9.300L.5 15.500" />
      </svg>
      <input type="text" placeholder="Type here to search" aria-label="Type here to search" />
    </SearchBox>
    <TaskIcons>
      <TaskButton aria-label="Task View">
        <svg width="17" height="16" viewBox="0 0 17 16" fill="none" stroke="#fff">
          <path d="M1.500 4.500h9v6h-9zM1.500 0v2.500h9V0M1.500 15.500v-3h9v3M14.500 0v16" />
          <rect x="13" y="4" width="3" height="3" fill="#fff" stroke="none" />
        </svg>
      </TaskButton>
      <TaskButton aria-label="Microsoft Edge">
        <svg width="24" height="24" viewBox="0 0 48 48"><EdgeShapes /></svg>
      </TaskButton>
      <TaskButton aria-label="File Explorer">
        <svg width="22" height="18" viewBox="0 0 22 18">
          <path d="M0 0h8l2 2h12v16H0z" fill="#e8a526" />
          <path d="M0 4h22v14H0z" fill="#fcd367" />
          <path d="M4 18v-7h14v7h-4v-3H8v3z" fill="#3a8fdc" />
        </svg>
      </TaskButton>
      <TaskButton aria-label="Firefox">
        <svg width="23" height="23" viewBox="0 0 48 48"><FirefoxShapes /></svg>
      </TaskButton>
      <TaskButton aria-label="NjRat" $active>
        <svg width="24" height="24" viewBox="0 0 48 48"><NjShapes /></svg>
      </TaskButton>
    </TaskIcons>
    <Tray>
      <TrayButton aria-label="Show hidden icons">
        <svg width="12" height="8" fill="none" stroke="#fff" strokeWidth="1.300"><path d="M.5 7L6 1.500 11.500 7" /></svg>
      </TrayButton>
      <TrayButton aria-label="Meet Now">
        <svg width="12" height="16" viewBox="0 0 12 16" fill="none" stroke="#fff">
          <rect x="1.500" y="4.500" width="7" height="7" rx="1" />
          <path d="M8.500 7.500l2.500-2v5l-2.500-2M2 2c2-1.700 5-1.700 7 0M2 14c2 1.700 5 1.700 7 0" />
        </svg>
      </TrayButton>
      <TrayButton aria-label="Network">
        <svg width="17" height="14" viewBox="0 0 17 14" fill="none" stroke="#fff">
          <path d="M5 2.500h11.500v7.500H5M9.500 10v3M6 13.500h8M.5.500h4v4h-4zM2.500 5v8.500H5" />
        </svg>
      </TrayButton>
      <TrayButton aria-label="Volume">
        <svg width="17" height="14" viewBox="0 0 17 14" fill="none" stroke="#fff">
          <path d="M.5 5H3l3.500-3.500v11L3 9H.500zM9 5c1 1 1 3 0 4M11.500 3c2 2 2 6 0 8M14 1.500c3 3 3 8 0 11" />
        </svg>
      </TrayButton>
      <Clock>10:50 AM<br />6/27/2024</Clock>
      <Notify aria-label="Notifications">
        <svg width="16" height="16" viewBox="0 0 16 16" fill="none" stroke="#fff"><path d="M.5 1.500h15v11h-5L8 15l-2.500-2.500h-5z" /></svg>
      </Notify>
      <ShowDesktop aria-label="Show desktop" />
    </Tray>
  </Taskbar>
);

export default function App() {
  return (
    <Screen>
      <GlobalStyle />
      <Desktop>
        <Background />
        <Icons items={leftItems} cols={3} />
        <Icons items={rightItems} cols={2} />
        <ClientWindow />
        <CreateWindow>
          <CreateTitle>
            Создать
            <CreateClose aria-label="Close">×</CreateClose>
          </CreateTitle>
          <Groups><Group /><Group /><Group /><Group /></Groups>
        </CreateWindow>
        <SaveDialog />
        <Watermark>
          <span>ANY</span>
          <svg width="56" height="62" viewBox="0 0 56 62" fill="none" stroke="#d8d8d8" strokeWidth="3.500" strokeLinejoin="round" strokeLinecap="round">
            <path d="M8 8c-3-2-5 0-5 2v38M13 46V3l39 21-3 3M13 12l39 22-39 24v-7l26-16" />
          </svg>
          <span>RUN</span>
        </Watermark>
      </Desktop>
      <TaskbarView />
    </Screen>
  );
}
